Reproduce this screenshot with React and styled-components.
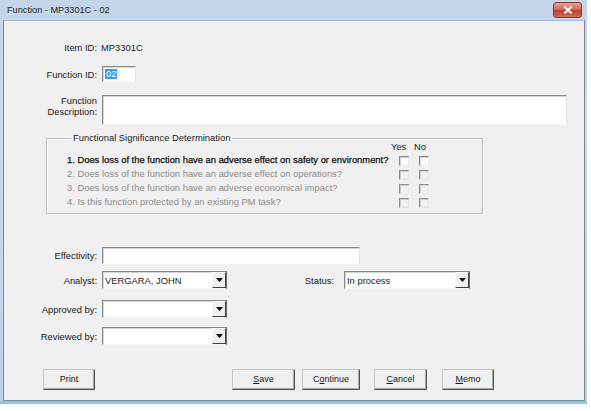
import React from "react";
import styled, { createGlobalStyle } from "styled-components";

const Global = createGlobalStyle`
  html, body { margin: 0; padding: 0; background: #ffffff; }
  body { font-family: "Liberation Sans", Arial, sans-serif; font-size: 9.4px; color: #1a1a1a; }
`;

const Window = styled.div`
  width: 587px;
  height: 404px;
  box-sizing: border-box;
  display: flex;
  flex-direction: column;
  padding: 0 2px 0 3px;
  background: linear-gradient(to bottom, #c4d5ea, #cbdaec 30%, #bcd0e6);
  border-bottom: 3px solid #8dc9d5;
`;

const TitleBar = styled.div`
  height: 20px;
  flex-shrink: 0;
  display: flex;
  align-items: center;
  justify-content: space-between;
  padding: 0 3px 0 4px;
  font-size: 9.2px;
  color: #1e1e1e;
`;

const CloseButton = styled.div`
  width: 29px;
  height: 16px;
  box-sizing: border-box;
  border: 1px solid #8b3a32;
  border-radius: 3px;
  background: linear-gradient(to bottom, #e3a597, #cf6a58 45%, #c2402c 55%, #d0705a);
  display: flex;
  align-items: center;
  justify-content: center;
`;

const Client = styled.div`
  flex: 1;
  display: flex;
  flex-direction: column;
  background: #f0f0f0;
  border: 1px solid #76889a;
  border-top-color: #a9bbd0;
`;

const Row = styled.div`
  display: flex;
  align-items: ${(p) => (p.$top ? "flex-start" : "center")};
  height: ${(p) => p.$h}px;
  margin-top: ${(p) => p.$mt}px;
  flex-shrink: 0;
`;

const Label = styled.span`
  width: ${(p) => p.$w || 93}px;
  margin-right: ${(p) => p.$gap || 5}px;
  flex-shrink: 0;
  text-align: right;
  line-height: 11px;
  white-space: nowrap;
  margin-top: ${(p) => p.$dy || 0}px;
`;

const Value = styled.span`
  white-space: nowrap;
  padding-left: 0px;
`;

const TextBox = styled.div`
  width: ${(p) => p.$w}px;
  height: ${(p) => p.$h}px;
  box-sizing: border-box;
  background: #ffffff;
  border: 1px solid;
  border-color: #8a8a8a #e2e2e2 #f7f7f7 #8a8a8a;
  box-shadow: inset 1px 1px 0 #d6d6d6;
  display: flex;
  align-items: center;
  padding-left: 2px;
`;

const Selected = styled.span`
  background: #3399ff;
  color: #ffffff;
  line-height: 10px;
  padding: 0 1px;
`;

const Combo = styled.div`
  width: ${(p) => p.$w}px;
  height: 18px;
  box-sizing: border-box;
  background: #ffffff;
  border: 1px solid;
  border-color: #8a8a8a #6a6a6a #f4f4f4 #8a8a8a;
  box-shadow: inset 1px 1px 0 #d6d6d6;
  display: flex;
  align-items: center;
`;

const ComboText = styled.span`
  flex: 1;
  padding-left: 2px;
  white-space: nowrap;
`;

const DropButton = styled.span`
  width: 14px;
  height: 100%;
  box-sizing: border-box;
  background: #f0f0f0;
  border-left: 1px solid #f8f8f8;
  border-right: 1px solid #404040;
  border-bottom: 1px solid #404040;
  border-top: 1px solid #f8f8f8;
  display: flex;
  align-items: center;
  justify-content: center;
`;

const Group = styled.fieldset`
  margin: 7px 0 0 42px;
  padding: 0 0 4px 20px;
  width: 437px;
  box-sizing: border-box;
  min-inline-size: 0;
  border: 1px solid #bdbdbd;
  box-shadow: inset 1px 1px 0 #ffffff, 1px 1px 0 #ffffff;
  flex-shrink: 0;
`;

const Legend = styled.legend`
  margin-left: 4px;
  margin-bottom: -3px;
  padding: 0 2px;
  line-height: 12px;
  font-size: 9.4px;
  color: #1a1a1a;
`;

const QGrid = styled.div`
  display: grid;
  grid-template-columns: 325px 20px 20px;
  grid-template-rows: 12px repeat(4, 14px);
  align-items: center;
`;

const Head = styled.span`
  justify-self: start;
  margin-left: ${(p) => p.$dx}px;
  line-height: 10px;
  color: #1a1a1a;
`;

const Question = styled.span`
  white-space: nowrap;
  line-height: 12px;
  color: ${(p) => (p.$disabled ? "#8d8d8d" : "#111111")};
  font-weight: ${(p) => (p.$disabled ? 400 : 400)};
  -webkit-text-stroke: ${(p) => (p.$disabled ? "0" : "0.25px #111")};
`;

const Check = styled.span`
  width: 10px;
  height: 10px;
  box-sizing: border-box;
  justify-self: center;
  margin-left: 4px;
  margin-top: 1px;
  border: 1px solid;
  border-color: #8a8a8a #e8e8e8 #e8e8e8 #8a8a8a;
  box-shadow: inset 1px 1px 0 #cfcfcf;
  background: ${(p) => (p.$enabled ? "#ffffff" : "#f0f0f0")};
`;

const ButtonRow = styled.div`
  display: flex;
  height: 21px;
  margin-top: 24px;
  flex-shrink: 0;
`;

const Button = styled.div`
  width: ${(p) => p.$w}px;
  margin-left: ${(p) => p.$ml}px;
  box-sizing: border-box;
  height: 21px;
  border: 1px solid;
  border-color: #c6c6c6 #555555 #555555 #c6c6c6;
  box-shadow: inset -1px -1px 0 #a8a8a8;
  background: #f0f0f0;
  display: flex;
  align-items: center;
  justify-content: center;
  font-size: 9px;
  color: #1a1a1a;
  padding-bottom: 1px;
  u { text-decoration: underline; text-underline-offset: 1px; }
`;

const Arrow = () => (
  <svg width="7" height="4" viewBox="0 0 7 4">
    <polygon points="0,0 7,0 3.5,4" fill="#111" />
  </svg>
);

const ComboBox = ({ w, value }) => (
  <Combo $w={w}>
    <ComboText>{value}</ComboText>
    <DropButton>
      <Arrow />
    </DropButton>
  </Combo>
);

const questions = [
  "1. Does loss of the function have an adverse effect on safety or environment?",
  "2. Does loss of the function have an adverse effect on operations?",
  "3. Does loss of the function have an adverse economical impact?",
  "4. Is this function protected by an existing PM task?",
];

export default function App() {
  return (
    <>
      <Global />
      <Window>
        <TitleBar>
          <span>Function - MP3301C - 02</span>
          <CloseButton>
            <svg width="10" height="8" viewBox="0 0 10 8">
              <path d="M1.5 0.8 L8.5 7.2 M8.5 0.8 L1.5 7.2" stroke="#fff" strokeWidth="2" />
            </svg>
          </CloseButton>
        </TitleBar>
        <Client>
          <Row $h={17} $mt={18}>
            <Label $gap={4}>Item ID:</Label>
            <Value>MP3301C</Value>
          </Row>
          <Row $h={16} $mt={10}>
            <Label>Function ID:</Label>
            <TextBox $w={34} $h={16}>
              <Selected>02</Selected>
            </TextBox>
          </Row>
          <Row $h={30} $mt={13} $top>
            <Label $dy={0}>
              Function
              <br />
              Description:
            </Label>
            <TextBox $w={465} $h={30} />
          </Row>
          <Group>
            <Legend>Functional Significance Determination</Legend>
            <QGrid>
              <span />
              <Head $dx={-1}>Yes</Head>
              <Head $dx={2}>No</Head>
              {questions.map((q, i) => (
                <React.Fragment key={q}>
                  <Question $disabled={i > 0}>{q}</Question>
                  <Check $enabled={i === 0} />
                  <Check $enabled={i === 0} />
                </React.Fragment>
              ))}
            </QGrid>
          </Group>
          <Row $h={17} $mt={33}>
            <Label>Effectivity:</Label>
            <TextBox $w={258} $h={17} />
          </Row>
          <Row $h={18} $mt={7}>
            <Label>Analyst:</Label>
            <ComboBox w={125} value="VERGARA, JOHN" />
            <Label $w={107} $gap={10}>Status:</Label>
            <ComboBox w={126} value="In process" />
          </Row>
          <Row $h={18} $mt={11}>
            <Label>Approved by:</Label>
            <ComboBox w={125} value="" />
          </Row>
          <Row $h={18} $mt={9}>
            <Label>Reviewed by:</Label>
            <ComboBox w={125} value="" />
          </Row>
          <ButtonRow>
            <Button $w={52} $ml={39}>Print</Button>
            <Button $w={63} $ml={137}>
              <span><u>S</u>ave</span>
            </Button>
            <Button $w={58} $ml={7}>
              <span>C<u>o</u>ntinue</span>
            </Button>
            <Button $w={53} $ml={14}>
              <span><u>C</u>ancel</span>
            </Button>
            <Button $w={52} $ml={15}>
              <span><u>M</u>emo</span>
            </Button>
          </ButtonRow>
        </Client>
      </Window>
    </>
  );
}
